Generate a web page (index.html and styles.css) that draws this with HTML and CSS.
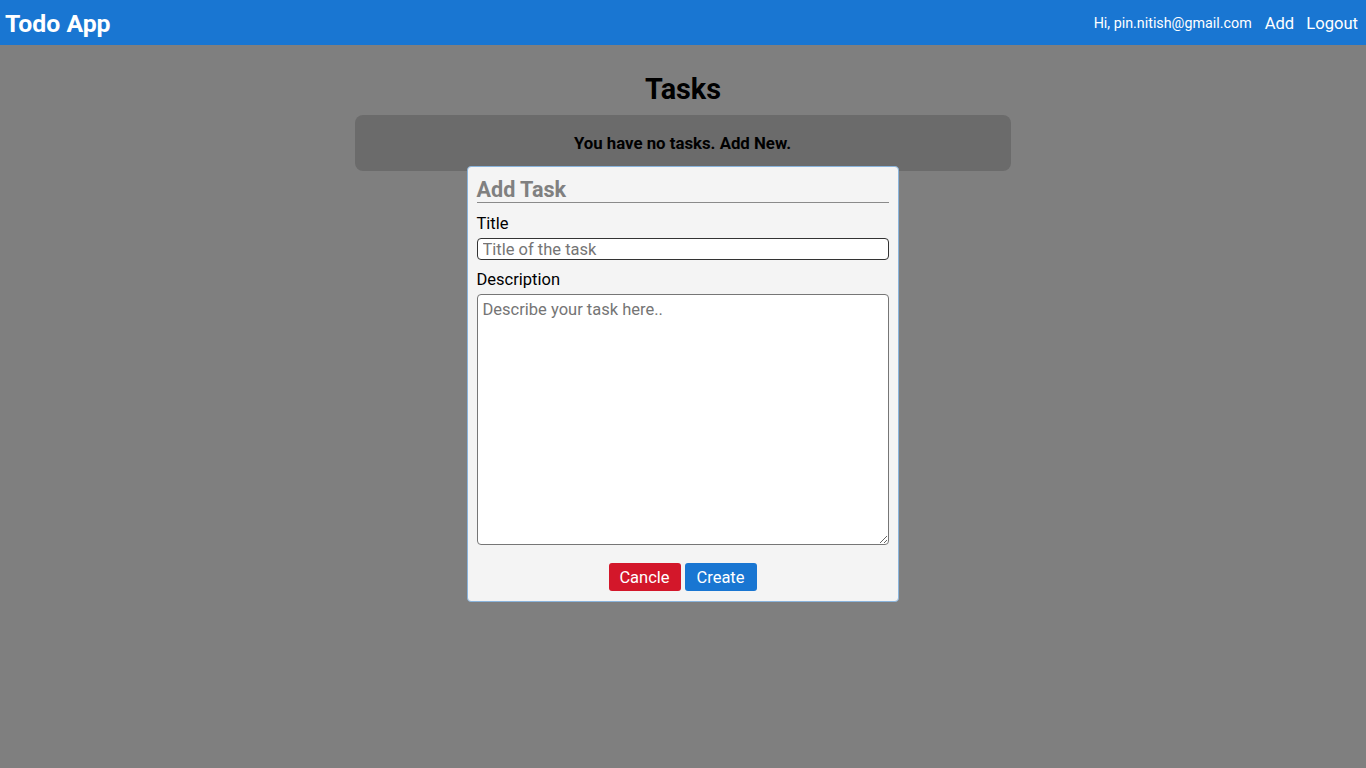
FILE: index.html
```html
<!DOCTYPE html>
<html lang="en">
<head>
<meta charset="utf-8">
<title>Todo App</title>
<link rel="stylesheet" href="styles.css">
</head>
<body>
<header class="navbar">
  <div class="brand">Todo App</div>
  <nav class="nav-right">
    <span class="greeting">Hi, pin.nitish@gmail.com</span>
    <a class="nav-link" href="#">Add</a>
    <a class="nav-link" href="#">Logout</a>
  </nav>
</header>
<main class="content">
  <h1 class="page-title">Tasks</h1>
  <div class="empty-box">You have no tasks. Add New.</div>
</main>
<div class="overlay">
  <form class="modal">
    <h2 class="modal-title">Add Task</h2>
    <label class="field-label" for="title">Title</label>
    <input class="text-input" id="title" type="text" placeholder="Title of the task">
    <label class="field-label" for="desc">Description</label>
    <textarea class="text-area" id="desc" placeholder="Describe your task here.."></textarea>
    <div class="actions">
      <button type="button" class="btn btn-cancel">Cancle</button>
      <button type="button" class="btn btn-create">Create</button>
    </div>
  </form>
</div>
</body>
</html>
```
FILE: styles.css
```css
* { box-sizing: border-box; }
html, body { margin: 0; padding: 0; }
body {
  font-family: Roboto, "Liberation Sans", Arial, sans-serif;
  background: #ffffff;
  color: #000;
  height: 768px;
}
.navbar {
  position: relative;
  z-index: 2;
  height: 45px;
  background: #1976d2;
  color: #fff;
  display: flex;
  align-items: center;
  justify-content: space-between;
  padding: 1px 8px 0 5px;
}
.brand {
  font-size: 24.8px;
  font-weight: 700;
}
.nav-right {
  display: flex;
  align-items: center;
  gap: 12px;
}
.greeting { font-size: 14.3px; margin-right: 1px; }
.nav-link {
  color: #fff;
  text-decoration: none;
  font-size: 16.6px;
}
.content {
  display: flex;
  flex-direction: column;
  align-items: center;
}
.page-title {
  margin: 27px 0 9px;
  font-size: 28.8px;
  font-weight: 700;
  line-height: 34px;
}
.empty-box {
  width: 656px;
  height: 56px;
  margin-left: -1px;
  background: #d6d6d6;
  border-radius: 8px;
  display: flex;
  align-items: center;
  justify-content: center;
  font-weight: 700;
  font-size: 16.8px;
}
.overlay {
  position: fixed;
  inset: 0;
  z-index: 1;
  background: rgba(0,0,0,0.5);
  display: flex;
  align-items: center;
  justify-content: center;
}
.modal {
  width: 432px;
  height: 436px;
  margin-left: -1px;
  background: #f4f4f4;
  border: 1px solid #8ab4dc;
  border-radius: 4px;
  padding: 7px 9px 10px;
  display: flex;
  flex-direction: column;
}
.modal-title {
  margin: 0;
  font-size: 21.6px;
  font-weight: 700;
  color: #808080;
  line-height: 28px;
  border-bottom: 1px solid #8a8a8a;
  padding: 2px 0 0;
  height: 29px;
}
.field-label {
  font-size: 16.5px;
  line-height: 19px;
  margin-top: 11px;
  margin-bottom: 5px;
}
.text-input {
  height: 22px;
  flex: none;
  border: 1px solid #333;
  border-radius: 4px;
  font: 16.5px Roboto, "Liberation Sans", Arial, sans-serif;
  padding: 0 5px;
  background: #fff;
}
.text-input + .field-label { margin-top: 10px; }
.text-area {
  height: 251px;
  flex: none;
  border: 1px solid #767676;
  border-radius: 4px;
  font: 16.5px Roboto, "Liberation Sans", Arial, sans-serif;
  padding: 5px 5px 4px;
  resize: both;
  background: #fff;
}
::placeholder { color: #757575; }
.actions {
  display: flex;
  justify-content: center;
  gap: 4px;
  margin-top: 18px;
}
.btn {
  width: 72px;
  height: 28px;
  border: none;
  border-radius: 3px;
  color: #fff;
  font: 16.5px Roboto, "Liberation Sans", Arial, sans-serif;
  padding: 0;
}
.btn-cancel { background: #d3172a; }
.btn-create { background: #1976d2; }
```
